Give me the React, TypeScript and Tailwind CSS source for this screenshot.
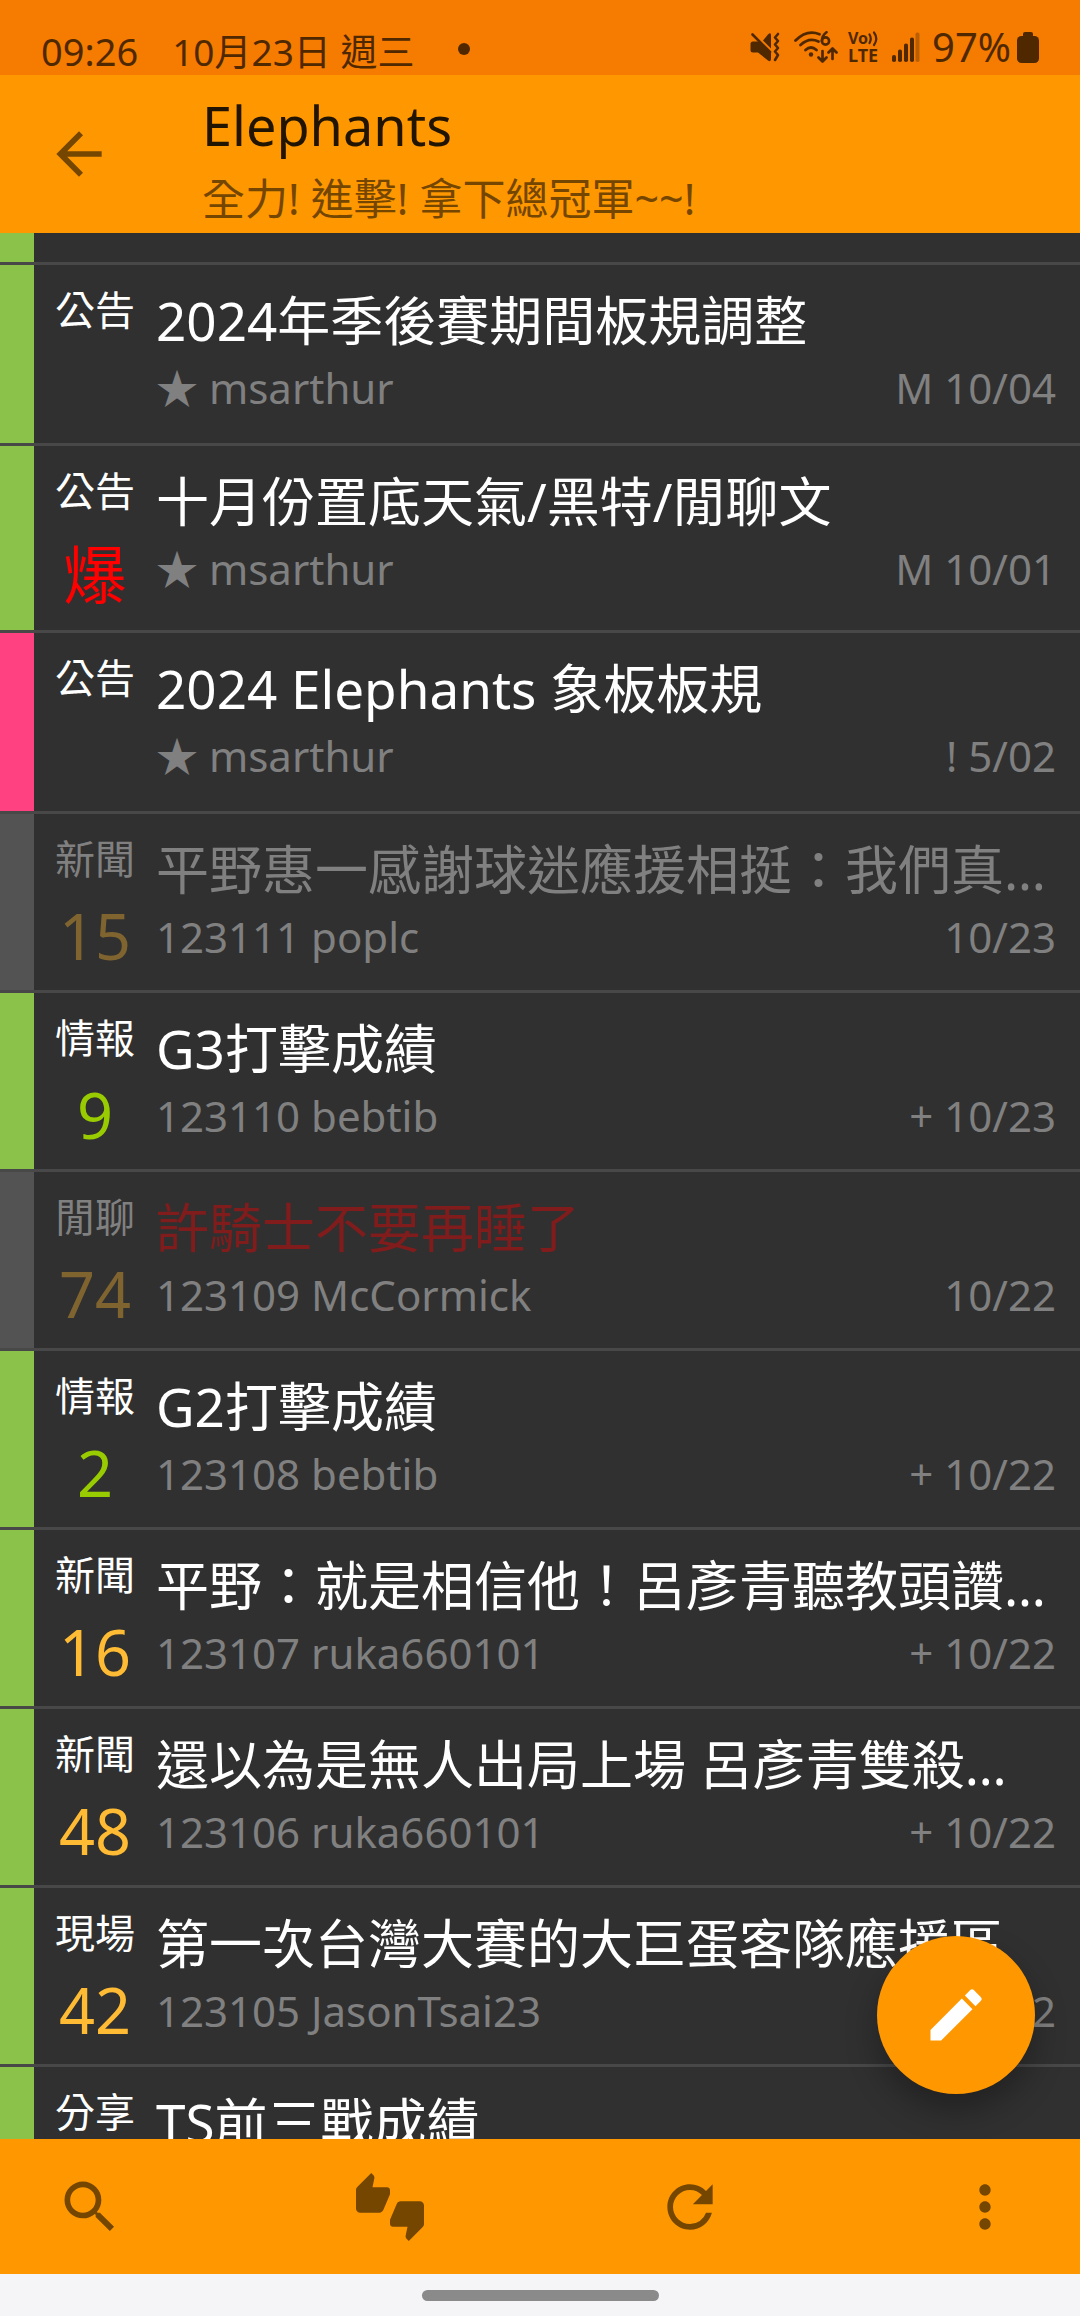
import React from "react";
import {
  MdArrowBack,
  MdEdit,
  MdMoreVert,
  MdRefresh,
  MdSearch,
  MdThumbsUpDown,
} from "react-icons/md";

type Post = {
  category: string;
  title: string;
  author?: string;
  date?: string;
  id?: string;
  count?: string;
  strip: "green" | "pink" | "gray";
  tone?: "hot" | "warm" | "low";
  read?: boolean;
  deleted?: boolean;
};

const posts: Post[] = [
  { category: "公告", title: "2024年季後賽期間板規調整", author: "msarthur", date: "M 10/04", strip: "green" },
  { category: "公告", title: "十月份置底天氣/黑特/閒聊文", author: "msarthur", date: "M 10/01", strip: "green", count: "爆", tone: "hot" },
  { category: "公告", title: "2024 Elephants 象板板規", author: "msarthur", date: "! 5/02", strip: "pink" },
  { category: "新聞", title: "平野惠一感謝球迷應援相挺：我們真…", id: "123111", author: "poplc", date: "10/23", strip: "gray", count: "15", tone: "warm", read: true },
  { category: "情報", title: "G3打擊成績", id: "123110", author: "bebtib", date: "+ 10/23", strip: "green", count: "9", tone: "low" },
  { category: "閒聊", title: "許騎士不要再睡了", id: "123109", author: "McCormick", date: "10/22", strip: "gray", count: "74", tone: "warm", read: true, deleted: true },
  { category: "情報", title: "G2打擊成績", id: "123108", author: "bebtib", date: "+ 10/22", strip: "green", count: "2", tone: "low" },
  { category: "新聞", title: "平野：就是相信他！呂彥青聽教頭讚…", id: "123107", author: "ruka660101", date: "+ 10/22", strip: "green", count: "16", tone: "warm" },
  { category: "新聞", title: "還以為是無人出局上場 呂彥青雙殺…", id: "123106", author: "ruka660101", date: "+ 10/22", strip: "green", count: "48", tone: "warm" },
  { category: "現場", title: "第一次台灣大賽的大巨蛋客隊應援區", id: "123105", author: "JasonTsai23", date: "+ 10/22", strip: "green", count: "42", tone: "warm" },
  { category: "分享", title: "TS前三戰成績", strip: "green" },
];

const stripColor = {
  green: "bg-[#8bc34a]",
  pink: "bg-[#ff4081]",
  gray: "bg-[#535353]",
};

function countColor(post: Post) {
  if (post.tone === "hot") return "text-[#ff0000]";
  if (post.tone === "low") return "text-[#99cc00]";
  return post.read ? "text-[#806430]" : "text-[#ffbb33]";
}

function titleColor(post: Post) {
  if (post.deleted) return "text-[#801c1c]";
  return post.read ? "text-[#808080]" : "text-white";
}

function PostRow({ post }: { post: Post }) {
  const isHot = post.tone === "hot";
  return (
    <li className="flex shrink-0 border-b-[3px] border-[#484848]">
      <span className={`w-[34px] shrink-0 ${stripColor[post.strip]}`} />
      <div className="flex w-[122px] shrink-0 flex-col items-center pt-5 pb-2 text-center">
        <span className={`text-[40px] leading-[50px] ${post.read ? "text-[#808080]" : "text-white"}`}>
          {post.category}
        </span>
        {post.count && (
          <span className={`text-[63px] leading-[92px] ${isHot ? "mt-3 pb-0.5" : "mt-1.5"} ${countColor(post)}`}>
            {post.count}
          </span>
        )}
      </div>
      <a href="#post" className="block min-w-0 flex-1 pt-4 pr-6 pb-6.5">
        <h2 className={`overflow-hidden text-[53px] leading-[80px] whitespace-nowrap ${titleColor(post)}`}>
          {post.title}
        </h2>
        {post.author && (
          <div
            className={`flex justify-between text-[42px] leading-[54px] whitespace-nowrap text-[#808080] ${
              post.id ? "" : "pb-0.5"
            }`}
          >
            <span>
              {post.id ?? "★"} {post.author}
            </span>
            <span>{post.date}</span>
          </div>
        )}
      </a>
    </li>
  );
}

function MuteIcon() {
  return (
    <svg viewBox="0 0 30 30" className="size-[30px]" fill="currentColor" aria-hidden="true">
      <path d="M3 9.500Q0.500 9.500 0.500 12V18Q0.500 20.500 3 20.500H8L18 28.500Q21 30.500 21 26.500V20.500L10 9.500Z" />
      <path d="M13 8.500 18 2.500Q21 -0.500 21 3.500V16.500Z" />
      <path d="M2.500 2.500 20 20" stroke="currentColor" strokeWidth="2.600" strokeLinecap="round" />
      <path
        d="M28 2 25 5.500 28 9 25 12.500 28 16 25 19.500 28 23 25 28"
        fill="none"
        stroke="currentColor"
        strokeWidth="2.600"
        strokeLinecap="round"
        strokeLinejoin="round"
      />
    </svg>
  );
}

function WifiIcon() {
  return (
    <svg viewBox="0 0 44 32" className="h-8 w-11" fill="none" stroke="currentColor" aria-hidden="true">
      <path d="M1.500 9.500Q13 -2 25.500 3.200" strokeWidth="2.800" strokeLinecap="round" />
      <path d="M6.500 14Q15 6 24.500 10.500" strokeWidth="2.800" strokeLinecap="round" />
      <path d="M11.500 19Q17 14 22.500 19" strokeWidth="2.800" strokeLinecap="round" />
      <circle cx="17" cy="23.500" r="2.200" fill="currentColor" stroke="none" />
      <circle cx="31.500" cy="10" r="3.600" strokeWidth="2.600" />
      <path d="M32.500 1.200Q28 4.500 27.900 10" strokeWidth="2.600" strokeLinecap="round" />
      <path d="M28.500 20V30M24.500 26.500 28.500 30.500 32.500 26.500" strokeWidth="2.700" strokeLinecap="round" strokeLinejoin="round" />
      <path d="M38.500 28V18M34.500 21.500 38.500 17.500 42.500 21.500" strokeWidth="2.700" strokeLinecap="round" strokeLinejoin="round" />
    </svg>
  );
}

function VolteIcon() {
  return (
    <svg viewBox="0 0 32 32" className="size-8 overflow-visible" fill="currentColor" aria-label="VoLTE">
      <text x="0" y="13" fontSize="16" fontWeight="700">
        Vo
      </text>
      <path
        d="M21.500 3.500Q24 7.500 21.500 12M26 1.500Q30.500 7.500 26 14"
        fill="none"
        stroke="currentColor"
        strokeWidth="2.200"
        strokeLinecap="round"
      />
      <text x="0" y="31" fontSize="18" fontWeight="700">
        LTE
      </text>
    </svg>
  );
}

function SignalIcon() {
  return (
    <svg viewBox="0 0 28 30" className="h-[30px] w-7" fill="currentColor" aria-hidden="true">
      <rect x="0" y="23" width="4" height="7" rx="1.800" />
      <rect x="6" y="17.500" width="4" height="12.500" rx="1.800" />
      <rect x="12" y="11.500" width="4" height="18.500" rx="1.800" />
      <rect x="18" y="5.500" width="4" height="24.500" rx="1.800" />
      <rect x="23.500" y="0.500" width="4" height="29.500" rx="1.800" opacity="0.35" />
    </svg>
  );
}

function BatteryIcon() {
  return (
    <svg viewBox="0 0 22 31" className="h-[31px] w-[22px]" fill="currentColor" aria-hidden="true">
      <rect x="6" y="0" width="10" height="8" rx="2" />
      <rect x="0" y="4" width="22" height="27" rx="4.500" />
    </svg>
  );
}

function StatusBar() {
  return (
    <div className="flex h-[75px] shrink-0 items-start justify-between bg-[#f57c00] px-[41px] leading-[46px] whitespace-nowrap text-[#502800]">
      <div className="flex items-baseline pt-7">
        <span className="text-[38px]">09:26</span>
        <span className="ml-[34px] text-[37px]">10月23日 週三</span>
        <span className="mb-1.5 ml-11 size-3 self-center rounded-full bg-[#502800]" />
      </div>
      <div className="flex items-center pt-6">
        <MuteIcon />
        <span className="ml-3.5">
          <WifiIcon />
        </span>
        <span className="ml-2.5">
          <VolteIcon />
        </span>
        <span className="ml-3">
          <SignalIcon />
        </span>
        <span className="mr-1.5 ml-3 text-[40px]">97%</span>
        <BatteryIcon />
      </div>
    </div>
  );
}

export default function App() {
  return (
    <div
      lang="zh-Hant"
      className="flex h-screen flex-col overflow-hidden bg-[#303030] font-['Noto_Sans','Noto_Sans_CJK_TC',sans-serif]"
    >
      <StatusBar />

      <header className="flex h-[158px] shrink-0 bg-[#ff9800] pl-[45px]">
        <button type="button" aria-label="返回" className="text-[#754600]">
          <MdArrowBack className="size-[68px]" />
        </button>
        <div className="ml-[89px] min-w-0 pt-[15px] whitespace-nowrap">
          <h1 className="text-[54px] leading-[70px] text-[#211400]">Elephants</h1>
          <p className="mt-1.5 text-[43px] leading-[66px] text-[#754600]">全力! 進擊! 拿下總冠軍~~!</p>
        </div>
      </header>

      <main className="relative min-h-0 flex-1 overflow-hidden">
        <ul className="flex flex-col">
          <li className="flex h-8 shrink-0 border-b-[3px] border-[#484848]">
            <span className="w-[34px] bg-[#8bc34a]" />
          </li>
          {posts.map((post) => (
            <PostRow key={post.title} post={post} />
          ))}
        </ul>
        <button
          type="button"
          aria-label="發文"
          className="absolute right-[45px] bottom-[45px] flex size-[158px] items-center justify-center rounded-full bg-[#ff9800] text-white shadow-[0_16px_32px_rgba(0,0,0,0.3)]"
        >
          <MdEdit className="size-[68px]" />
        </button>
      </main>

      <nav className="flex h-[135px] shrink-0 items-center bg-[#ff9800] pr-[66px] pl-14 text-[#754600]">
        <div className="flex-1">
          <button type="button" aria-label="搜尋" className="block">
            <MdSearch className="size-[68px]" />
          </button>
        </div>
        <div className="flex-1">
          <button type="button" aria-label="推文" className="block">
            <MdThumbsUpDown className="size-[68px]" />
          </button>
        </div>
        <div className="flex-1">
          <button type="button" aria-label="重新整理" className="block">
            <MdRefresh className="size-[68px]" />
          </button>
        </div>
        <button type="button" aria-label="更多" className="flex w-[58px] justify-center">
          <MdMoreVert className="size-[68px] shrink-0" />
        </button>
      </nav>

      <div className="flex h-[42px] shrink-0 justify-center bg-[#f5f5f7] pt-4">
        <span className="h-[11px] w-[237px] rounded-full bg-[#8a8a8a]" />
      </div>
    </div>
  );
}
